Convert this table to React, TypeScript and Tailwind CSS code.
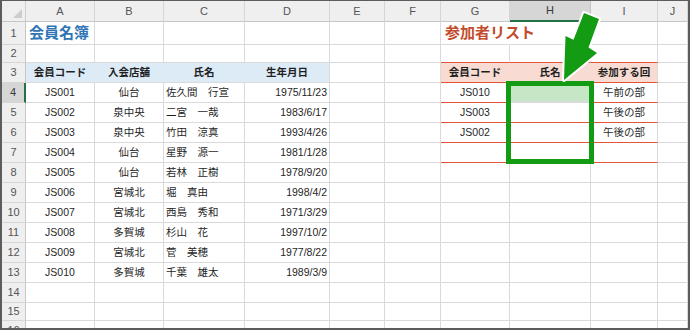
import React from "react";

type Cell = { t?: string; cls?: string };

const BASE = "box-border border-r border-b border-r-[#dadada] border-b-[#dadada] flex items-center whitespace-nowrap overflow-visible text-[10.5px] text-[#1f1f1f] pt-[1px]";

const members = [
  ["JS001", "仙台", "佐久間　行宣", "1975/11/23"],
  ["JS002", "泉中央", "二宮　一哉", "1983/6/17"],
  ["JS003", "泉中央", "竹田　涼真", "1993/4/26"],
  ["JS004", "仙台", "星野　源一", "1981/1/28"],
  ["JS005", "仙台", "若林　正樹", "1978/9/20"],
  ["JS006", "宮城北", "堀　真由", "1998/4/2"],
  ["JS007", "宮城北", "西島　秀和", "1971/3/29"],
  ["JS008", "多賀城", "杉山　花", "1997/10/2"],
  ["JS009", "宮城北", "菅　美穂", "1977/8/22"],
  ["JS010", "多賀城", "千葉　雄太", "1989/3/9"],
];

const participants = [
  ["JS010", "午前の部"],
  ["JS003", "午後の部"],
  ["JS002", "午後の部"],
];

function buildRows(): Cell[][] {
  const rows: Cell[][] = [];
  for (let r = 1; r <= 16; r++) {
    const row: Cell[] = [];
    for (let c = 0; c < 10; c++) row.push({});
    rows.push(row);
  }
  rows[0][0] = { t: "会員名簿", cls: "pl-[3px] text-[15px] font-bold text-[#2f75b5]" };
  rows[0][6] = { t: "参加者リスト", cls: "pl-[4px] text-[15px] font-bold text-[#c34b2d] border-r-transparent" };
  for (let c = 0; c < 4; c++) rows[1][c] = { cls: "border-b-[#5b9bd5]" };
  for (let c = 6; c < 9; c++) rows[1][c] = { cls: "border-b-[#e2543a]" };
  const lh = ["会員コード", "入会店舗", "氏名", "生年月日"];
  lh.forEach((t, i) => {
    rows[2][i] = {
      t,
      cls:
        "justify-center font-bold bg-[#ddebf7] border-b-[#5b9bd5] " +
        (i < 3 ? "border-r-[#ddebf7]" : ""),
    };
  });
  const rh = ["会員コード", "氏名", "参加する回"];
  rh.forEach((t, i) => {
    rows[2][6 + i] = {
      t,
      cls:
        "justify-center font-bold bg-[#f8dcd3] border-b-[#e2543a] " +
        (i < 2 ? "border-r-[#f8dcd3]" : ""),
    };
  });
  members.forEach((m, i) => {
    const r = rows[3 + i];
    r[0] = { t: m[0], cls: "justify-center border-b-[#5b9bd5]" };
    r[1] = { t: m[1], cls: "justify-center border-b-[#5b9bd5]" };
    r[2] = { t: m[2], cls: "justify-start pl-[2px] border-b-[#5b9bd5]" };
    r[3] = { t: m[3], cls: "justify-end pr-[2px] border-b-[#5b9bd5]" };
  });
  for (let i = 0; i < 4; i++) {
    const r = rows[3 + i];
    const p = participants[i];
    r[6] = { t: p ? p[0] : undefined, cls: "justify-center border-b-[#e2543a]" };
    r[7] = { cls: "border-b-[#e2543a]" };
    r[8] = { t: p ? p[1] : undefined, cls: "justify-center border-b-[#e2543a]" };
  }
  rows[3][7] = { cls: "bg-[#c5e7c5] border-b-2 border-b-[#217346]" };
  return rows;
}

const COLS = ["A", "B", "C", "D", "E", "F", "G", "H", "I", "J"];

export default function App() {
  const rows = buildRows();
  return (
    <div
      className="relative w-[690px] h-[330px] box-border border-t border-l-2 border-r-2 border-b-2 border-[#5c5c5c] bg-white overflow-hidden"
      style={{ fontFamily: "'Liberation Sans', 'Noto Sans CJK JP', sans-serif" }}
    >
      <div className="grid grid-cols-[24px_69px_69px_81px_85px_55px_56px_69px_81px_67px_30px] grid-rows-[21px_23px_18px_repeat(12,20px)_18px_20px] h-[327px] overflow-hidden">
        <div className="relative box-border bg-[#efefef] border-r border-b border-r-[#cfcfcf] border-b-[#c6c6c6]">
          <div className="absolute right-[3px] bottom-[3px] w-0 h-0 border-l-[9px] border-l-transparent border-b-[9px] border-b-[#cdcdcd]" />
        </div>
        {COLS.map((c) => (
          <div
            key={c}
            className={
              "box-border flex items-center justify-center text-[11px] border-r " +
              (c === "H"
                ? "bg-[#d6d6d6] text-[#3b3b3b] border-b-2 border-b-[#217346] border-r-[#c4c4c4]"
                : "bg-[#efefef] text-[#555] border-b border-b-[#c6c6c6] border-r-[#d6d6d6]")
            }
          >
            {c}
          </div>
        ))}
        {rows.map((row, ri) => (
          <React.Fragment key={ri}>
            <div
              className={
                "box-border flex items-center justify-center text-[11px] border-b border-b-[#d6d6d6] " +
                (ri === 3
                  ? "bg-[#d6d6d6] text-[#3b3b3b] border-r-2 border-r-[#217346]"
                  : "bg-[#efefef] text-[#555] border-r border-r-[#c6c6c6]")
              }
            >
              {ri + 1}
            </div>
            {row.map((cell, ci) => (
              <div key={ci} className={BASE + " " + (cell.cls || "")}>
                {cell.t}
              </div>
            ))}
          </React.Fragment>
        ))}
      </div>

      <div className="absolute left-[504px] top-[80px] w-[88px] h-[83px] box-border border-[5px] border-[#139b13]" />

      <svg className="absolute left-0 top-0 pointer-events-none" width="690" height="330" viewBox="2 1 690 330">
        <polygon
          points="584,13 599,19 588.5,47.5 597,53 564,80 565.5,36 573.5,39.8"
          fill="#139b13"
          stroke="#ffffff"
          strokeWidth="4"
          strokeLinejoin="round"
          style={{ paintOrder: "stroke" }}
        />
      </svg>
    </div>
  );
}
